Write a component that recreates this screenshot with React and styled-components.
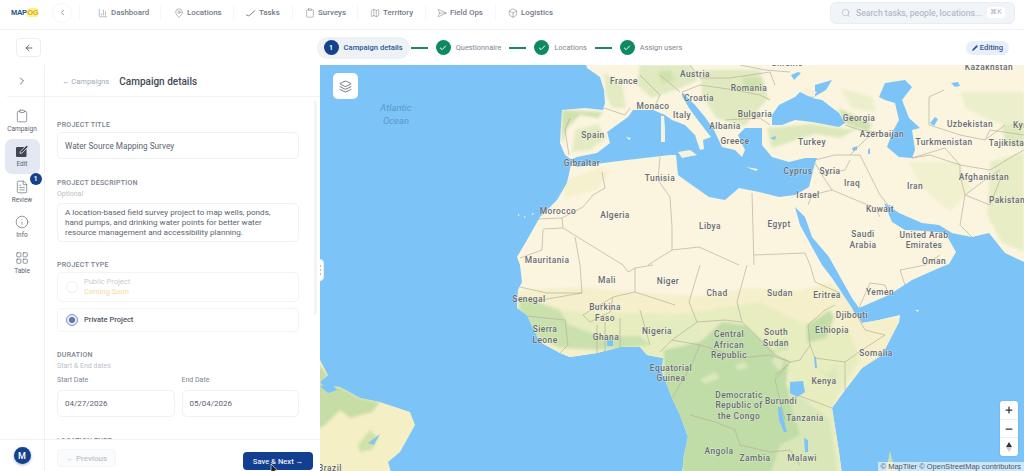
import React from "react";
import styled, { createGlobalStyle } from "styled-components";
import {
  ArrowLeft,
  Box,
  ChartColumn,
  Check,
  ChevronLeft,
  ChevronRight,
  Clipboard,
  FileText,
  Info,
  Layers,
  LayoutGrid,
  Map as MapIcon,
  MapPin,
  Minus,
  Pencil,
  Plus,
  Search,
  SendHorizontal,
} from "lucide-react";

const GlobalStyle = createGlobalStyle`
  html, body { margin: 0; padding: 0; height: 100%; background: #fff; }
  #root { height: 100%; }
  * { box-sizing: border-box; }
  body { font-family: Roboto, "Liberation Sans", sans-serif; color: #374151; }
`;

const Page = styled.div`
  width: 1024px;
  height: 471px;
  display: flex;
  flex-direction: column;
  overflow: hidden;
`;

const TopBar = styled.header`
  height: 30px;
  flex: none;
  display: flex;
  align-items: center;
  padding: 0 9px 4px 11px;
  border-bottom: 1px solid #f1f2f4;
`;

const Logo = styled.div`
  width: 27px;
  display: flex;
  align-items: center;
  font-family: "Liberation Sans", sans-serif;
  font-size: 7.5px;
  font-weight: 700;
  letter-spacing: -0.3px;
  color: #24548f;
`;

const LogoMark = styled.span`
  margin-left: 0.5px;
  background: #fff08a;
  color: #d9ad1e;
  border-radius: 2px;
  line-height: 9px;
`;

const RoundBack = styled.button`
  width: 20px;
  height: 20px;
  margin-left: 14px;
  padding: 0;
  border: 1px solid #f5f6f7;
  border-radius: 50%;
  background: #fff;
  color: #6b7280;
  display: flex;
  align-items: center;
  justify-content: center;
`;

const Nav = styled.nav`
  display: flex;
  align-items: center;
  margin-left: 7px;
  border-left: 1px solid #f5f6f7;
`;

const NavItem = styled.a`
  display: flex;
  align-items: center;
  gap: 3px;
  height: 15px;
  width: ${(props) => props.$w}px;
  padding-left: ${(props) => props.$pl}px;
  border-right: 1px solid ${(props) => (props.$last ? "transparent" : "#f5f6f7")};
  font-size: 7.9px;
  font-weight: 500;
  color: #737b87;
  white-space: nowrap;
`;

const SearchBox = styled.div`
  margin-left: auto;
  width: 185px;
  height: 22px;
  background: #f1f4f8;
  border: 1px solid #e9edf2;
  border-radius: 6px;
  display: flex;
  align-items: center;
  gap: 5px;
  padding: 0 9px 0 10px;
  font-size: 8.7px;
  color: #a8b1bd;
  white-space: nowrap;
`;

const Kbd = styled.span`
  margin-left: auto;
  background: #fff;
  border-radius: 3px;
  width: 18px;
  height: 11px;
  font-size: 6.5px;
  line-height: 11px;
  text-align: center;
  color: #a8b1bd;
`;

const StepBar = styled.div`
  height: 35px;
  flex: none;
  display: flex;
  align-items: center;
  justify-content: space-between;
  padding: 0 15px 0 16px;
`;

const BackButton = styled.button`
  width: 25px;
  height: 19px;
  padding: 0;
  background: #fff;
  border: 1px solid #eceef1;
  border-radius: 4px;
  color: #4b5563;
  display: flex;
  align-items: center;
  justify-content: center;
`;

const Steps = styled.div`
  display: flex;
  align-items: center;
  margin-right: 8px;
`;

const Step = styled.div`
  display: flex;
  align-items: center;
  gap: 5px;
  height: 22px;
  padding: ${(props) => (props.$active ? "0 7px 0 7px" : "0")};
  border-radius: 11px;
  background: ${(props) => (props.$active ? "#eef1f6" : "transparent")};
  font-size: ${(props) => (props.$active ? 7.6 : 7.4)}px;
  font-weight: ${(props) => (props.$active ? 500 : 400)};
  color: ${(props) => (props.$active ? "#2a5a98" : "#7b8794")};
  white-space: nowrap;
`;

const StepDot = styled.span`
  width: 15px;
  height: 15px;
  border-radius: 50%;
  background: ${(props) => (props.$active ? "#14418c" : "#0f8a5f")};
  color: #fff;
  font-size: 7px;
  font-weight: 700;
  display: flex;
  align-items: center;
  justify-content: center;
`;

const Connector = styled.span`
  width: 17px;
  height: 2px;
  margin: 0 8px 0 ${(props) => (props.$first ? 1 : 8)}px;
  background: #1b8a63;
`;

const EditingBadge = styled.span`
  display: flex;
  align-items: center;
  gap: 2px;
  height: 14px;
  padding: 0 6px;
  border-radius: 7px;
  background: #e8eff8;
  color: #2a5a98;
  font-size: 7.5px;
  font-weight: 500;
`;

const Body = styled.div`
  flex: 1;
  min-height: 0;
  display: flex;
`;

const Rail = styled.aside`
  width: 45px;
  flex: none;
  display: flex;
  flex-direction: column;
  border-right: 1px solid #f1f2f4;
`;

const RailToggle = styled.div`
  height: 32px;
  flex: none;
  margin-left: 7px;
  display: flex;
  align-items: center;
  justify-content: center;
  padding-right: 7px;
  border-bottom: 1px solid #f1f2f4;
  color: #6b7280;
`;

const RailList = styled.div`
  flex: 1;
  display: flex;
  flex-direction: column;
  align-items: center;
  padding-top: 6px;
`;

const RailItem = styled.div`
  position: relative;
  width: 35px;
  height: 35.5px;
  display: flex;
  flex-direction: column;
  align-items: center;
  justify-content: center;
  gap: 2px;
  border-radius: 7px;
  background: ${(props) => (props.$active ? "#e3e8f3" : "transparent")};
  color: #59616d;
  font-size: 6.5px;
`;

const RailBadge = styled.span`
  position: absolute;
  top: -1px;
  right: -2px;
  width: 12px;
  height: 12px;
  border-radius: 50%;
  background: #14418c;
  color: #fff;
  font-size: 6.5px;
  font-weight: 700;
  display: flex;
  align-items: center;
  justify-content: center;
`;

const RailFoot = styled.div`
  height: 32px;
  flex: none;
  border-top: 1px solid #f1f2f4;
  display: flex;
  align-items: center;
  justify-content: center;
`;

const Avatar = styled.span`
  width: 17px;
  height: 17px;
  border-radius: 50%;
  background: #14418c;
  color: #fff;
  font-size: 9px;
  font-weight: 500;
  display: flex;
  align-items: center;
  justify-content: center;
  box-shadow: 0 1px 3px rgba(20, 65, 140, 0.4);
`;

const Panel = styled.section`
  position: relative;
  width: 275px;
  flex: none;
  display: flex;
  flex-direction: column;
`;

const PanelHead = styled.div`
  height: 32px;
  flex: none;
  display: flex;
  align-items: center;
  gap: 10px;
  padding: 2px 0 0 17px;
  border-bottom: 1px solid #f1f2f4;
`;

const Crumb = styled.span`
  font-size: 7.5px;
  color: #a3abb6;
`;

const PanelTitle = styled.h1`
  margin: 0;
  font-size: 10px;
  font-weight: 500;
  color: #3f4754;
`;

const Scroller = styled.div`
  flex: 1;
  min-height: 0;
  overflow: hidden;
  padding: 23px 21px 0 12px;
`;

const ScrollThumb = styled.span`
  position: absolute;
  top: 35px;
  right: 3px;
  width: 3px;
  height: 215px;
  border-radius: 2px;
  background: #f3f4f6;
`;

const FieldLabel = styled.div`
  font-size: 7px;
  line-height: 10px;
  font-weight: 500;
  letter-spacing: 0.25px;
  text-transform: uppercase;
  color: #7a828e;
  margin-top: ${(props) => props.$mt ?? 19}px;
`;

const Hint = styled.div`
  margin-top: 1px;
  font-size: 7px;
  line-height: 10px;
  color: #bcc1c9;
`;

const Input = styled.div`
  height: 27px;
  margin-top: ${(props) => props.$mt ?? 2}px;
  display: flex;
  align-items: center;
  padding: 0 7px;
  border: 1px solid #eff1f4;
  border-radius: 5px;
  font-size: ${(props) => props.$fs ?? 8.2}px;
  color: #5b6470;
`;

const TextArea = styled.div`
  height: 39px;
  margin-top: 4px;
  padding: 4px 20px 4px 7px;
  border: 1px solid #eff1f4;
  border-radius: 5px;
  font-size: 8.1px;
  line-height: 9.8px;
  color: #5b6470;
`;

const TypeCard = styled.div`
  height: ${(props) => props.$h}px;
  margin-top: ${(props) => props.$mt}px;
  display: flex;
  align-items: center;
  gap: 6px;
  padding: 0 8px;
  border: 1px solid #f2f3f5;
  border-radius: 5px;
`;

const Radio = styled.span`
  width: 12px;
  height: 12px;
  border-radius: 50%;
  flex: none;
  display: flex;
  align-items: center;
  justify-content: center;
  border: 1px solid ${(props) => (props.$on ? "#7f97c1" : "#eef0f3")};
  background: ${(props) => (props.$on ? "#e6ebf4" : "#fff")};
  &::after {
    content: "";
    width: 6px;
    height: 6px;
    border-radius: 50%;
    background: ${(props) => (props.$on ? "#5d78ab" : "transparent")};
  }
`;

const TypeName = styled.div`
  font-size: 7.5px;
  line-height: 10px;
  font-weight: ${(props) => (props.$on ? 500 : 400)};
  color: ${(props) => (props.$on ? "#4b5563" : "#c9cdd3")};
`;

const Soon = styled.div`
  font-size: 7.5px;
  line-height: 10px;
  color: #f8dba0;
`;

const DateRow = styled.div`
  display: grid;
  grid-template-columns: 1fr 1fr;
  gap: 7px;
  margin-top: 4px;
`;

const DateLabel = styled.div`
  font-size: 7px;
  line-height: 10px;
  color: #7b8794;
`;

const PanelFoot = styled.div`
  position: relative;
  height: 32px;
  flex: none;
  display: flex;
  align-items: flex-start;
  justify-content: space-between;
  padding: 9px 7px 0 12px;
  border-top: 1px solid #f1f2f4;
  background: #fff;
`;

const PrevButton = styled.button`
  width: 59px;
  height: 18px;
  border: 1px solid #f3f5f8;
  border-radius: 4px;
  background: #fafbfc;
  color: #bfc5cd;
  font: 500 8px Roboto, sans-serif;
`;

const SaveButton = styled.button`
  position: relative;
  width: 70px;
  height: 18px;
  margin-top: 3px;
  border: 0;
  border-radius: 4px;
  background: #123f8f;
  color: #e8eefb;
  font: 500 7.6px Roboto, sans-serif;
`;

const Cursor = styled.svg`
  position: absolute;
  left: 27px;
  top: 12px;
`;

const MapPane = styled.div`
  position: relative;
  flex: 1;
  overflow: hidden;
  background: #7cc4f7;
`;

const MapSvg = styled.svg`
  display: block;
  width: 100%;
  height: 100%;
  text {
    font-family: Roboto, "Liberation Sans", sans-serif;
    font-size: 8.4px;
    font-weight: 500;
    letter-spacing: 0.45px;
    fill: #676b71;
    text-anchor: middle;
    dominant-baseline: central;
    stroke: rgba(255, 255, 255, 0.4);
    stroke-width: 1.2px;
    paint-order: stroke;
  }
  text.ocean {
    font-style: italic;
    font-size: 9.5px;
    font-weight: 400;
    letter-spacing: 0;
    fill: #5d97c8;
    stroke: none;
  }
`;

const Splitter = styled.div`
  position: absolute;
  left: -4px;
  top: 194px;
  width: 8px;
  height: 22px;
  border-radius: 4px;
  background: #fff;
  border: 1px solid #eceef1;
  display: flex;
  flex-direction: column;
  align-items: center;
  justify-content: center;
  gap: 2px;
  span {
    width: 2px;
    height: 2px;
    border-radius: 50%;
    background: #9ca3af;
  }
`;

const LayerButton = styled.button`
  position: absolute;
  left: 13px;
  top: 8px;
  width: 25px;
  height: 26px;
  padding: 0;
  border: 0;
  border-radius: 5px;
  background: #fff;
  color: #475569;
  display: flex;
  align-items: center;
  justify-content: center;
`;

const ZoomControl = styled.div`
  position: absolute;
  right: 6px;
  top: 336px;
  width: 18px;
  height: 55px;
  border-radius: 3px;
  background: #fff;
  display: flex;
  flex-direction: column;
  box-shadow: 0 0 2px rgba(0, 0, 0, 0.15);
`;

const ZoomBtn = styled.div`
  flex: 1;
  display: flex;
  align-items: center;
  justify-content: center;
  color: #333;
  & + & {
    border-top: 1px solid #eee;
  }
`;

const Attribution = styled.div`
  position: absolute;
  right: 0;
  bottom: 0;
  height: 9px;
  padding: 0 3px;
  background: rgba(255, 255, 255, 0.6);
  font: 7.5px/9px "Liberation Sans", sans-serif;
  color: #555;
  white-space: nowrap;
`;

const TaskIcon = ({ size }) => (
  <svg width={size} height={size} viewBox="0 0 10 10" fill="none" stroke="currentColor" strokeWidth="0.9" strokeLinecap="round">
    <path d="M0.5 7 L2.5 7.8 L4 7 L9 2.5" />
  </svg>
);

const EditIcon = ({ size }) => (
  <svg width={size} height={size} viewBox="0 0 14 14">
    <rect x="1" y="3" width="10.5" height="10" rx="1" fill="#3f4754" />
    <path d="M5 9.4 L5.4 7.4 L11.6 1.2 L13.2 2.8 L7 9 Z" fill="#3f4754" stroke="#e3e8f3" strokeWidth="0.8" />
  </svg>
);

const navItems = [
  { label: "Dashboard", Icon: ChartColumn, w: 81, pl: 18 },
  { label: "Locations", Icon: MapPin, w: 73, pl: 13 },
  { label: "Tasks", Icon: TaskIcon, w: 59, pl: 12 },
  { label: "Surveys", Icon: Clipboard, w: 65, pl: 12 },
  { label: "Territory", Icon: MapIcon, w: 68, pl: 12 },
  { label: "Field Ops", Icon: SendHorizontal, w: 70, pl: 11 },
  { label: "Logistics", Icon: Box, w: 70, pl: 12, last: true },
];

const railItems = [
  { label: "Campaign", Icon: Clipboard },
  { label: "Edit", Icon: EditIcon, active: true },
  { label: "Review", Icon: FileText, badge: 1 },
  { label: "Info", Icon: Info },
  { label: "Table", Icon: LayoutGrid },
];

const LAND =
  "M585,60 L587,68 600,77 604,90 605,103 603,110 585,108 562,110 561,125 560,143 565,155 572,160 567,183 557,200 540,217 527,240 517,257 520,265 522,282 518,290 517,308 527,315 533,328 540,342 560,353 570,357 597,353 620,347 640,347 647,355 663,358 662,372 672,398 680,415 688,437 684,455 682,475 842,475 839,452 832,408 845,390 862,368 882,355 899,322 900,315 879,320 862,323 855,312 859,308 889,295 912,280 939,268 949,264 956,252 948,238 946,232 972,237 989,233 1005,253 1024,262 1024,60 Z";

const seas = [
  // mediterranean
  "M570,160 L577,157 597,153 610,143 607,132 628,117 633,110 653,110 665,115 672,120 685,125 695,135 700,150 704,149 703,140 711,137 700,123 689,108 682,96 682,92 695,105 705,117 714,130 722,147 735,150 742,157 745,150 738,135 745,128 762,128 762,145 772,157 789,162 805,158 817,158 815,163 809,187 795,195 779,197 759,192 739,188 725,200 709,197 689,183 678,175 676,155 670,155 653,157 627,160 603,163 577,167 Z",
  // black sea + azov
  "M772,125 L772,115 779,105 795,97 800,92 806,90 808,96 815,97 815,85 832,80 826,90 812,98 822,100 839,113 845,123 839,127 812,122 795,120 782,125 Z",
  // caspian
  "M879,97 L885,83 905,80 912,87 902,100 909,118 920,128 912,130 915,150 912,158 899,157 887,147 892,133 899,120 895,103 885,100 Z",
  // red sea + suez
  "M795,207 L805,217 812,237 829,257 839,275 852,298 859,308 855,314 852,308 842,293 832,278 822,265 812,247 800,225 Z",
  // persian gulf
  "M884,203 L892,208 899,213 922,223 939,225 952,233 946,233 925,231 905,230 892,222 Z",
];

const landColor = "#fbf5e0";

const sahel =
  "M510,290 L582,287 640,292 700,296 750,288 800,290 830,282 860,310 905,320 880,360 850,400 845,475 670,475 510,350 Z";
const centralGreen =
  "M664,350 L700,342 722,322 745,325 775,352 788,362 786,385 792,410 800,435 780,445 770,475 684,475 664,395 Z";
const westGreen = "M520,296 L560,310 568,324 600,336 640,336 650,345 600,350 560,348 532,335 518,315 Z";

const greens = [
  ["#e3ebc3", "M604,72 L622,84 626,108 612,108 606,95 Z"],
  ["#cfe2ae", "M562,110 L603,112 598,118 580,115 567,128 562,145 Z"],
  ["#e4ebc3", "M575,130 L598,124 606,138 590,150 572,152 Z"],
  ["#e0e9bf", "M640,65 L690,65 698,80 680,88 652,98 637,85 Z"],
  ["#cfe2ae", "M658,72 L670,70 676,80 662,84 Z"],
  ["#e0e9bf", "M700,70 L760,70 768,98 745,126 716,118 702,95 Z"],
  ["#cfe2ae", "M742,76 L762,78 764,88 746,90 Z"],
  ["#dce8bb", "M767,128 L812,124 845,129 858,128 840,138 815,134 790,142 772,148 Z"],
  ["#cfe2ae", "M838,108 L872,124 868,132 846,124 Z"],
  ["#ecefcb", "M840,88 L872,97 876,112 852,108 Z"],
  ["#ecefcb", "M960,92 L1024,92 1024,132 985,118 966,108 Z"],
  ["#e8edc6", "M990,162 L1024,152 1024,252 1002,243 987,215 Z"],
  ["#dee9bd", "M1002,126 L1024,122 1024,148 1006,144 Z"],
  ["#f2f1cf", "M908,162 L958,162 972,188 950,212 922,188 Z"],
  ["#f5f0cd", "M562,182 L600,168 610,172 596,190 566,198 Z"],
  ["#c3dda8", "M807,325 L830,310 834,318 826,338 807,343 Z"],
  ["#d3e4b2", "M775,342 L788,338 788,350 776,352 Z"],
  ["#dce8bb", "M838,385 L814,367 830,373 836,362 Z"],
  ["#e3ebc0", "M642,322 L698,318 702,340 666,344 Z"],
];

const lakes = [
  "M790,382 L803,381 805,392 797,397 790,393 Z",
  "M778,407 L781,407 785,425 787,432 784,432 779,420 Z",
  "M804,438 L808,440 808,452 805,452 Z",
  "M814,357 L816,357 817,368 815,368 Z",
  "M607,340 L613,340 613,346 607,346 Z",
  "M930,123 L935,117 938,119 934,126 Z",
  "M951,83 L958,82 960,86 955,87 Z",
  "M791,75 L798,72 801,73 794,80 Z",
  "M852,148 L857,146 857,150 853,151 Z",
  "M868,150 L870,148 870,154 868,154 Z",
  "M770,138 L776,136 775,140 Z",
];

const islands = [
  "M661,116 L664,116 665,128 665,142 661,142 661,130 Z",
  "M626,137 L631,138 629,140 Z",
  "M678,152 L690,150 697,155 682,158 Z",
  "M746,167 L758,169 756,171 Z",
  "M518,214 L520,215 518,216 Z",
  "M524,216 L526,217 524,218 Z",
  "M532,213 L534,214 532,215 Z",
  "M915,310 L919,310 918,312 Z",
];

const BRAZIL =
  "M320,360 L328,375 320,382 322,385 340,387 360,398 380,402 410,412 415,425 400,452 388,462 392,475 315,475 Z";

const borders = [
  "602,172 605,188 593,195 583,207 562,218 537,219",
  "562,218 563,228 623,265 628,272 635,268 653,265",
  "543,229 563,228",
  "543,230 542,250 520,258",
  "575,237 580,265 582,293 547,293 520,287",
  "635,268 635,292 613,297 583,315",
  "660,157 658,180 670,197 672,227 672,250 648,265",
  "752,193 754,265",
  "754,255 805,253",
  "672,250 699,247 739,265",
  "700,265 689,302 697,322 672,340 660,352",
  "747,265 737,302 742,322 725,320 697,322",
  "742,322 775,355 790,362 800,360",
  "675,305 635,292",
  "613,297 610,312 590,322 583,315",
  "640,310 650,345",
  "620,318 620,347",
  "605,322 605,352",
  "597,325 597,353",
  "565,320 568,345 560,353",
  "530,302 582,293",
  "527,316 565,320",
  "672,398 690,368 700,345 672,340",
  "700,345 740,358 770,355 790,362",
  "775,375 788,365",
  "690,415 715,422 735,430 740,445 770,452 790,450 800,465",
  "785,420 775,380 790,362",
  "800,360 810,345 808,325 825,310 835,305",
  "810,345 815,358 845,362 862,350 885,335 865,330 855,312",
  "797,395 832,408",
  "845,362 845,390",
  "805,253 810,265 815,282 840,293",
  "889,295 885,285 870,283 859,308",
  "905,285 900,270 925,265 940,255",
  "682,92 700,85 735,90 760,95 770,100",
  "690,65 700,78 730,78 770,72 775,85",
  "740,65 765,70 790,72",
  "725,120 760,118 770,125",
  "604,108 625,115 630,108",
  "565,130 570,118",
  "565,130 569,155",
  "640,75 650,85 660,95 653,110",
  "660,75 672,85 680,92",
  "815,160 835,155 860,155 870,175",
  "815,163 822,175 845,170 850,160",
  "822,175 832,190 812,195 808,205",
  "832,190 875,208 880,217",
  "870,175 880,195 888,205",
  "850,155 865,140 875,132",
  "845,125 860,130 875,132 890,135",
  "912,158 945,148 960,165 960,175 965,195 960,225 972,237",
  "912,158 930,155 960,165",
  "929,97 929,125 945,130 960,135 985,140 1005,125",
  "929,97 944,90",
  "960,165 990,170 1015,155 1024,150",
  "985,140 990,130 1024,135",
  "965,195 985,180 1000,170",
  "965,195 990,205 1000,180",
];

const labels = [
  ["France", 624, 81], ["Monaco", 653, 106], ["Spain", 593, 135], ["Gibraltar", 582, 163],
  ["Tunisia", 660, 178], ["Morocco", 558, 211], ["Algeria", 615, 215], ["Mauritania", 547, 260],
  ["Ukraine", 787, 63], ["Kazakhstan", 989, 67], ["Austria", 695, 74], ["Romania", 749, 88],
  ["Croatia", 699, 98], ["Italy", 682, 115], ["Bulgaria", 755, 114], ["Albania", 725, 126],
  ["Greece", 735, 141], ["Georgia", 859, 118], ["Azerbaijan", 882, 134], ["Uzbekistan", 970, 124],
  ["Kyrgyzstan", 1036, 125], ["Turkmenistan", 944, 142], ["Tajikistan", 1009, 143], ["Turkey", 812, 142],
  ["Cyprus", 798, 171], ["Syria", 830, 171], ["Iraq", 852, 183], ["Iran", 915, 186],
  ["Afghanistan", 984, 177], ["Pakistan", 1007, 200], ["Israel", 808, 195], ["Kuwait", 880, 209],
  ["Libya", 710, 226], ["Egypt", 779, 224], ["Saudi", 863, 234], ["Arabia", 863, 245],
  ["United Arab", 924, 235], ["Emirates", 924, 245], ["Oman", 934, 261], ["Mali", 607, 280],
  ["Niger", 668, 281], ["Senegal", 529, 299], ["Burkina", 605, 307], ["Faso", 605, 318],
  ["Sierra", 545, 329], ["Leone", 545, 340], ["Ghana", 606, 337], ["Nigeria", 657, 331],
  ["Equatorial", 671, 368], ["Guinea", 671, 378], ["Chad", 717, 293], ["Sudan", 780, 293],
  ["Eritrea", 827, 295], ["Yemen", 880, 292], ["Djibouti", 852, 315], ["Ethiopia", 832, 330],
  ["Central", 729, 334], ["African", 729, 345], ["Republic", 729, 355], ["South", 776, 332],
  ["Sudan", 776, 343], ["Somalia", 876, 353], ["Kenya", 824, 381], ["Democratic", 739, 395],
  ["Republic of", 739, 405], ["the Congo", 739, 416], ["Burundi", 781, 401], ["Tanzania", 805, 418],
  ["Angola", 719, 451], ["Zambia", 755, 458], ["Malawi", 802, 458], ["Brazil", 330, 468],
];

const WorldMap = () => (
  <MapSvg viewBox="320 65 704 406" preserveAspectRatio="none">
    <defs>
      <clipPath id="landClip">
        <path d={LAND} />
      </clipPath>
      <clipPath id="brazilClip">
        <path d={BRAZIL} />
      </clipPath>
      <filter id="soft" x="-5%" y="-5%" width="110%" height="110%">
        <feGaussianBlur stdDeviation="1.6" />
      </filter>
    </defs>
    <rect x="320" y="65" width="704" height="406" fill="#7cc4f7" />
    <path d={BRAZIL} fill="#f5efc6" />
    <g clipPath="url(#brazilClip)">
      <g filter="url(#soft)">
        <path d="M315,360 L328,375 322,385 340,387 360,398 380,402 372,412 350,418 340,410 325,425 315,430 Z" fill="#c6dda6" />
        <path d="M358,445 L370,430 378,438 372,450 360,452 Z" fill="#cfe2a8" />
      </g>
    </g>
    <path d="M368,443 L380,434 374,445 Z" fill="#8cc4e6" />
    <path d="M320,386 L332,384 337,390 328,393 Z" fill="#7cc4f7" />
    <path d={LAND} fill={landColor} />
    <g clipPath="url(#landClip)">
      <g filter="url(#soft)">
        <path d={sahel} fill="#f5f0cb" />
        <path d="M515,308 L600,312 680,314 760,302 800,322 850,332 860,360 835,400 842,475 680,475 660,360 580,345 Z" fill="#e8edc0" />
        <path d="M786,385 L830,420 838,475 770,475 Z" fill="#d9e7b8" />
        <path d={centralGreen} fill="#c0dca7" />
        <path d={westGreen} fill="#cbe1ad" />
        <path d="M700,380 L715,372 720,378 706,384 Z M735,365 L745,362 748,368 738,370 Z M775,352 L785,358 780,372 772,362 Z" fill="#dbe8bb" />
        {greens.map(([fill, d], i) => (
          <path key={i} d={d} fill={fill} />
        ))}
      </g>
    </g>
    {seas.map((d, i) => (
      <path key={i} d={d} fill="#7cc4f7" />
    ))}
    {islands.map((d, i) => (
      <path key={i} d={d} fill="#f4f3dc" />
    ))}
    <path d="M885,475 L890,451 896,475 Z" fill="#c9dfae" />
    <path d="M808,96 L800,92 806,88 817,92 812,97 Z" fill="#f7f1d6" />
    {lakes.map((d, i) => (
      <path key={i} d={d} fill="#7cc4f7" />
    ))}
    {borders.map((points, i) => (
      <polyline key={i} points={points} fill="none" stroke="#b8b09d" strokeWidth="0.7" />
    ))}
    <text className="ocean" x="396" y="107">Atlantic</text>
    <text className="ocean" x="396" y="120">Ocean</text>
    {labels.map(([name, x, y]) => (
      <text key={name + x} x={x} y={y}>{name}</text>
    ))}
  </MapSvg>
);

const App = () => {
  return (
    <Page>
      <GlobalStyle />
      <TopBar>
        <Logo>
          MAP<LogoMark>OG</LogoMark>
        </Logo>
        <RoundBack>
          <ChevronLeft size={9} />
        </RoundBack>
        <Nav>
          {navItems.map(({ label, Icon, w, pl, last }) => (
            <NavItem key={label} $w={w} $pl={pl} $last={last}>
              <Icon size={10} strokeWidth={1.2} />
              {label}
            </NavItem>
          ))}
        </Nav>
        <SearchBox>
          <Search size={10} strokeWidth={1.4} />
          Search tasks, people, locations...
          <Kbd>⌘K</Kbd>
        </SearchBox>
      </TopBar>
      <StepBar>
        <BackButton>
          <ArrowLeft size={10} />
        </BackButton>
        <Steps>
          <Step $active>
            <StepDot $active>1</StepDot>
            Campaign details
          </Step>
          <Connector $first />
          <Step>
            <StepDot>
              <Check size={8} strokeWidth={3} />
            </StepDot>
            Questionnaire
          </Step>
          <Connector />
          <Step>
            <StepDot>
              <Check size={8} strokeWidth={3} />
            </StepDot>
            Locations
          </Step>
          <Connector />
          <Step>
            <StepDot>
              <Check size={8} strokeWidth={3} />
            </StepDot>
            Assign users
          </Step>
        </Steps>
        <EditingBadge>
          <Pencil size={6} fill="currentColor" />
          Editing
        </EditingBadge>
      </StepBar>
      <Body>
        <Rail>
          <RailToggle>
            <ChevronRight size={12} />
          </RailToggle>
          <RailList>
            {railItems.map(({ label, Icon, active, badge }) => (
              <RailItem key={label} $active={active}>
                <Icon size={14} strokeWidth={1.1} />
                {label}
                {badge && <RailBadge>{badge}</RailBadge>}
              </RailItem>
            ))}
          </RailList>
          <RailFoot>
            <Avatar>M</Avatar>
          </RailFoot>
        </Rail>
        <Panel>
          <PanelHead>
            <Crumb>← Campaigns</Crumb>
            <PanelTitle>Campaign details</PanelTitle>
          </PanelHead>
          <Scroller>
            <FieldLabel $mt={0}>Project title</FieldLabel>
            <Input>Water Source Mapping Survey</Input>
            <FieldLabel>Project description</FieldLabel>
            <Hint>Optional</Hint>
            <TextArea>
              A location-based field survey project to map wells, ponds, hand
              pumps, and drinking water points for better water resource
              management and accessibility planning.
            </TextArea>
            <FieldLabel $mt={18}>Project type</FieldLabel>
            <TypeCard $h={30} $mt={2}>
              <Radio />
              <div>
                <TypeName>Public Project</TypeName>
                <Soon>Coming Soon</Soon>
              </div>
            </TypeCard>
            <TypeCard $h={24} $mt={6}>
              <Radio $on />
              <TypeName $on>Private Project</TypeName>
            </TypeCard>
            <FieldLabel $mt={18}>Duration</FieldLabel>
            <Hint>Start &amp; End dates</Hint>
            <DateRow>
              <div>
                <DateLabel>Start Date</DateLabel>
                <Input $mt={5} $fs={8}>04/27/2026</Input>
              </div>
              <div>
                <DateLabel>End Date</DateLabel>
                <Input $mt={5} $fs={8}>05/04/2026</Input>
              </div>
            </DateRow>
            <FieldLabel>Location type</FieldLabel>
          </Scroller>
          <ScrollThumb />
          <PanelFoot>
            <PrevButton>← Previous</PrevButton>
            <SaveButton>
              Save &amp; Next →
              <Cursor width="9" height="11" viewBox="0 0 9 11">
                <path d="M1 0 L1 9 L3.2 7 L5 10.5 L6.5 9.8 L4.8 6.6 L7.6 6.4 Z" fill="#222" stroke="#fff" strokeWidth="0.6" />
              </Cursor>
            </SaveButton>
          </PanelFoot>
        </Panel>
        <MapPane>
          <WorldMap />
          <Splitter>
            <span />
            <span />
            <span />
          </Splitter>
          <LayerButton>
            <Layers size={13} strokeWidth={1.4} />
          </LayerButton>
          <ZoomControl>
            <ZoomBtn>
              <Plus size={10} strokeWidth={3} />
            </ZoomBtn>
            <ZoomBtn>
              <Minus size={10} strokeWidth={3} />
            </ZoomBtn>
            <ZoomBtn>
              <svg width="6" height="10" viewBox="0 0 6 10">
                <path d="M3 0 L6 5 L0 5 Z" fill="#333" />
                <path d="M3 10 L6 5 L0 5 Z" fill="#ccc" />
              </svg>
            </ZoomBtn>
          </ZoomControl>
          <Attribution>© MapTiler © OpenStreetMap contributors</Attribution>
        </MapPane>
      </Body>
    </Page>
  );
};

export default App;
